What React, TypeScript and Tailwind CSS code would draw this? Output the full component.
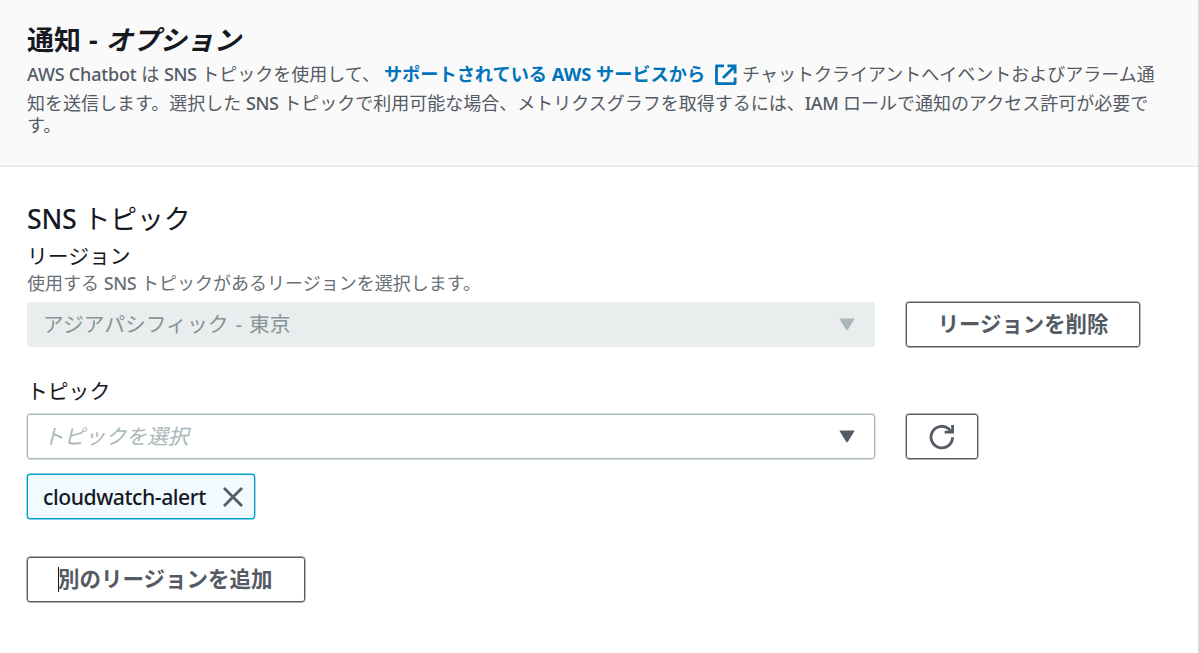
import type { ReactNode } from "react";

function Latin({ children, className = "" }: { children: ReactNode; className?: string }) {
  return <span className={`font-['Noto_Sans'] font-medium ${className}`}>{children}</span>;
}

function ExternalIcon() {
  return (
    <svg width="22" height="22" viewBox="0 0 22 22" fill="none" stroke="#0073bb" strokeWidth="2.8">
      <path d="M9 1.9H1.5V19.6H20.1V13.5" strokeLinejoin="round" />
      <path d="M12.5 1.9H20.1V9.5M20.1 1.9L8 14" />
    </svg>
  );
}

function RefreshIcon() {
  return (
    <svg width="26" height="26" viewBox="0 0 26 26" fill="none" stroke="#545b64" strokeWidth="2.8">
      <path d="M23.6 13.2A10.8 10.8 0 1 1 19.5 4.6L22.6 8.2" />
      <path d="M23.6 1V8.2H15.6" />
    </svg>
  );
}

function Caret({ className }: { className: string }) {
  return (
    <svg width="16" height="13" viewBox="0 0 16 13" className={className} fill="currentColor">
      <path d="M1.2 0.5H14.8Q15.8 0.5 15.2 1.5L8.7 11.9Q8 12.8 7.3 11.9L0.8 1.5Q0.2 0.5 1.2 0.5Z" />
    </svg>
  );
}

export default function App() {
  return (
    <div className="h-[653px] w-[1200px] overflow-hidden border-r-2 border-[#d5dbdb] bg-white font-['Noto_Sans','Noto_Sans_CJK_JP',sans-serif] text-[#16191f]">
      <header className="h-[167px] border-b-2 border-[#eaeded] bg-[#fafafa] pl-[27px] pt-[22px]">
        <h2 className="h-[38px] whitespace-nowrap text-[27px] font-bold leading-[35px]">
          通知 <span className="mx-px">-</span> <em>オプション</em>
        </h2>
        <div className="whitespace-nowrap text-[18px] text-[#545b64]">
          <p className="flex h-[29px] items-center leading-[29px]">
            <span>
              <Latin className="tracking-[-0.01em]">AWS Chatbot</Latin> は{" "}
              <Latin className="tracking-[-0.02em]">SNS</Latin> トピックを使用して、
            </span>
            <a className="ml-[4px] flex items-center text-[18.2px] font-bold text-[#0073bb]">
              サポートされている AWS サービスから
              <span className="ml-[10px]">
                <ExternalIcon />
              </span>
            </a>
            <span className="ml-[5px]">チャットクライアントへイベントおよびアラーム通</span>
          </p>
          <p className="h-[26px] leading-[28px]">
            知を送信します。選択した <Latin className="tracking-[-0.02em]">SNS</Latin>{" "}
            トピックで利用可能な場合、メトリクスグラフを取得するには、
            <Latin className="tracking-[-0.02em]">IAM</Latin> ロールで通知のアクセス許可が必要で
          </p>
          <p className="h-[20px] leading-[20px]">す。</p>
        </div>
      </header>

      <main className="whitespace-nowrap pl-[27px] pt-[33px]">
        <h3 className="h-[41px] text-[26.8px] leading-[38px]">
          <Latin className="tracking-[-0.01em]">SNS</Latin> トピック
        </h3>
        <label className="block h-[30px] text-[20.8px] leading-[31px]">リージョン</label>
        <p className="h-[31px] text-[18px] leading-[24px] text-[#687078]">
          使用する <Latin className="tracking-[-0.02em]">SNS</Latin> トピックがあるリージョンを選択します。
        </p>
        <div className="flex gap-[31px]">
          <div className="flex h-[45px] w-[848px] items-center justify-between rounded-[3px] bg-[#eaeded] pl-4 pr-5 text-[20.8px] text-[#879596]">
            <span>
              アジアパシフィック <span className="mx-[1.5px]">-</span> 東京
            </span>
            <Caret className="text-[#aab7b8]" />
          </div>
          <button className="flex h-[45px] w-[234px] items-center justify-center rounded-[3px] border border-[#545b64] text-[21.4px] font-bold text-[#545b64] ring-[0.4px] ring-[#545b64]">
            リージョンを削除
          </button>
        </div>

        <label className="mt-[29px] block h-[38px] text-[20.8px] leading-[31px]">トピック</label>
        <div className="flex gap-[31px]">
          <div className="flex h-[45px] w-[848px] items-center justify-between rounded-[3px] border border-[#aab7b8] pl-[15px] pr-[19px] text-[20.8px] text-[#aab7b8] ring-[0.4px] ring-[#aab7b8]">
            <em>トピックを選択</em>
            <Caret className="text-[#545b64]" />
          </div>
          <button className="flex h-[45px] w-[72px] items-center justify-center rounded-[3px] border border-[#545b64] ring-[0.4px] ring-[#545b64]">
            <RefreshIcon />
          </button>
        </div>

        <div className="mt-[15px] flex h-[45px] w-[228px] items-center justify-between rounded-[3px] border border-[#00a1c9] bg-[#f1faff] pl-[15px] pr-[11px] text-[21.2px] ring-[0.4px] ring-[#00a1c9]">
          <Latin className="tracking-[-0.022em]">cloudwatch-alert</Latin>
          <svg width="20" height="20" viewBox="0 0 20 20" stroke="#545b64" strokeWidth="2.8">
            <path d="M1 1L19 19M19 1L1 19" />
          </svg>
        </div>

        <button className="mt-[38px] flex h-[45px] w-[278px] items-center rounded-[3px] border border-[#545b64] pl-[30px] text-[21.5px] font-bold text-[#545b64] ring-[0.4px] ring-[#545b64]">
          <span className="-mr-px h-[25px] w-px bg-[#16191f]" />
          別のリージョンを追加
        </button>
      </main>
    </div>
  );
}
